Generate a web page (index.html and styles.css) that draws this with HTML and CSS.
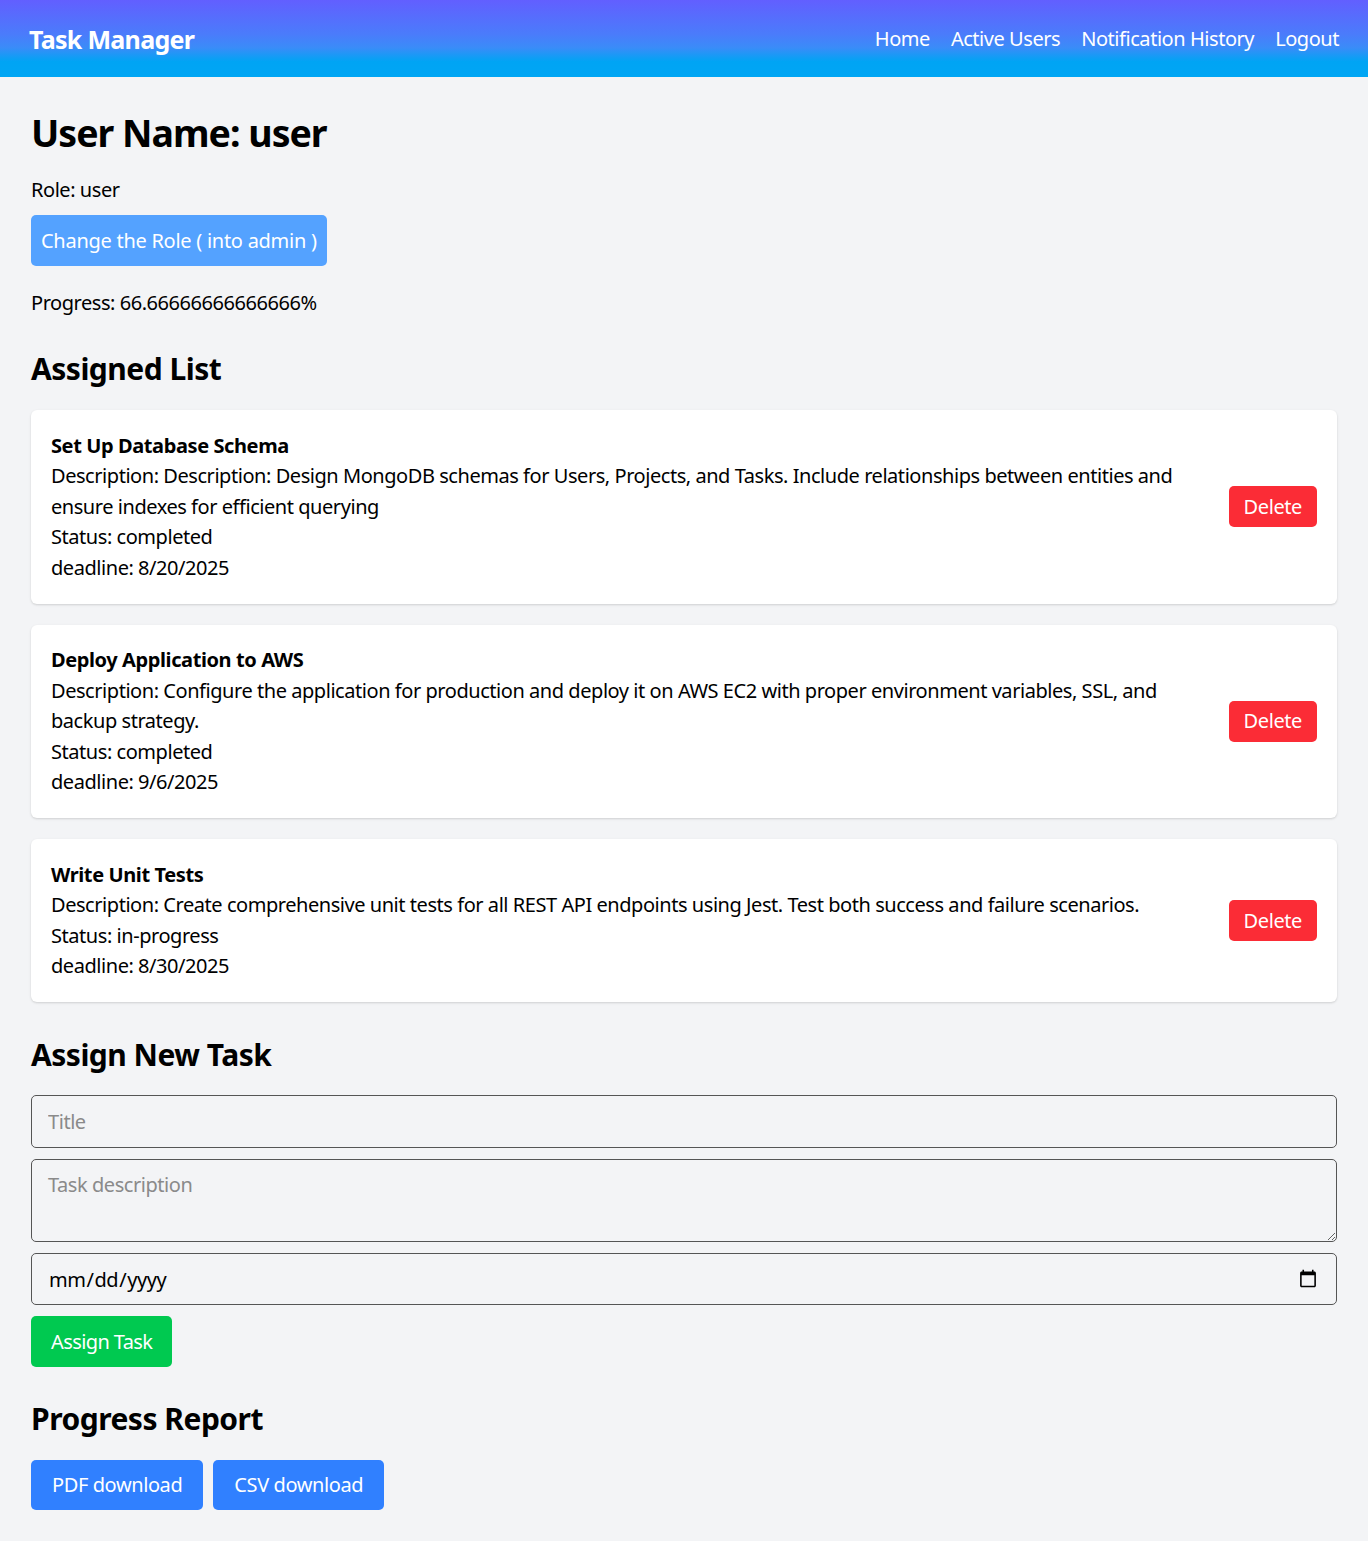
FILE: index.html
```html
<!DOCTYPE html>
<html lang="en">
<head>
<meta charset="utf-8">
<title>Task Manager</title>
<link rel="stylesheet" href="styles.css">
</head>
<body>
<header class="topbar">
  <div class="brand">Task Manager</div>
  <nav class="nav">
    <a href="#">Home</a>
    <a href="#">Active Users</a>
    <a href="#">Notification History</a>
    <a href="#">Logout</a>
  </nav>
</header>
<main class="page">
  <h1 class="title">User Name: user</h1>
  <p class="line role">Role: user</p>
  <div class="row role-row"><button class="btn btn-light">Change the Role ( into admin )</button></div>
  <p class="line progress">Progress: 66.66666666666666%</p>

  <h2 class="section assigned">Assigned List</h2>
  <div class="cards">
    <div class="card">
      <div class="card-body">
        <div class="card-title">Set Up Database Schema</div>
        <div>Description: Description: Design MongoDB schemas for Users, Projects, and Tasks. Include relationships between entities and ensure indexes for efficient querying</div>
        <div>Status: completed</div>
        <div>deadline: 8/20/2025</div>
      </div>
      <button class="btn btn-red">Delete</button>
    </div>
    <div class="card">
      <div class="card-body">
        <div class="card-title">Deploy Application to AWS</div>
        <div>Description: Configure the application for production and deploy it on AWS EC2 with proper environment variables, SSL, and backup strategy.</div>
        <div>Status: completed</div>
        <div>deadline: 9/6/2025</div>
      </div>
      <button class="btn btn-red">Delete</button>
    </div>
    <div class="card">
      <div class="card-body">
        <div class="card-title">Write Unit Tests</div>
        <div>Description: Create comprehensive unit tests for all REST API endpoints using Jest. Test both success and failure scenarios.</div>
        <div>Status: in-progress</div>
        <div>deadline: 8/30/2025</div>
      </div>
      <button class="btn btn-red">Delete</button>
    </div>
  </div>

  <h2 class="section newtask">Assign New Task</h2>
  <form class="form">
    <input class="field field-input" type="text" placeholder="Title">
    <textarea class="field field-area" placeholder="Task description"></textarea>
    <input class="field field-date" type="date">
    <div class="row"><button type="button" class="btn btn-green">Assign Task</button></div>
  </form>

  <h2 class="section report">Progress Report</h2>
  <div class="row downloads">
    <button class="btn btn-blue">PDF download</button>
    <button class="btn btn-blue">CSV download</button>
  </div>
</main>
</body>
</html>
```
FILE: styles.css
```css
* { box-sizing: border-box; }
html, body { margin: 0; padding: 0; }
body {
  background: #f3f4f6;
  font-family: "Noto Sans", "Open Sans", sans-serif;
  font-size: 20px;
  letter-spacing: -0.45px;
  color: #000;
}
.topbar {
  height: 77px;
  display: flex;
  align-items: center;
  justify-content: space-between;
  padding: 0 29px;
  background: linear-gradient(180deg, #625fff 0%, #4a7cfb 45%, #3a8cf8 62%, #00a4f4 80%, #00a6f4 100%);
  color: #fff;
}
.brand { font-size: 25px; font-weight: 700; line-height: 30px; letter-spacing: -0.7px; }
.nav { display: flex; gap: 21px; }
.nav a { color: #fff; text-decoration: none; font-size: 20px; line-height: 30px; }

.page {
  display: flex;
  flex-direction: column;
  padding: 33px 31px 31px;
}
.title { margin: 0; font-size: 37.5px; line-height: 45px; font-weight: 700; letter-spacing: -1px; }
.line { margin: 0; line-height: 30px; }
.role { margin-top: 20px; }
.row { display: flex; gap: 10px; }
.role-row { margin-top: 10px; }
.progress { margin-top: 22px; }

.btn {
  border: none;
  border-radius: 5px;
  color: #fff;
  font-family: inherit;
  font-size: 20px;
  letter-spacing: -0.4px;
  line-height: 30px;
  cursor: pointer;
}
.btn-light { background: #54a2ff; height: 51px; padding: 0 10px; letter-spacing: -0.27px; }
.btn-red { background: #fb2c36; height: 41px; padding: 0 15px; flex: none; }
.btn-green { background: #00c950; height: 51px; padding: 0 20px; letter-spacing: -0.6px; }
.btn-blue { background: #3080ff; height: 50px; padding: 0 21px; }

.section { margin: 0; font-size: 30px; line-height: 38px; font-weight: 700; letter-spacing: -0.5px; }
.assigned { margin-top: 32px; }
.newtask { margin-top: 34px; }
.report { margin-top: 33px; }

.cards { display: flex; flex-direction: column; gap: 21px; margin-top: 22px; }
.card {
  background: #fff;
  border-radius: 6px;
  box-shadow: 0 1px 3px rgba(0,0,0,0.1), 0 1px 2px rgba(0,0,0,0.06);
  padding: 20.5px 20px;
  display: flex;
  align-items: center;
  gap: 40px;
}
.card-body { flex: 1; line-height: 30.5px; }
.card-title { font-weight: 700; letter-spacing: -0.4px; }

.form { display: flex; flex-direction: column; gap: 11px; margin-top: 21px; }
.field {
  width: 100%;
  border: 1px solid #555;
  border-radius: 5px;
  background: transparent;
  font-family: inherit;
  font-size: 20px;
  letter-spacing: -0.45px;
  color: #000;
  padding: 0 16px;
}
.field::placeholder { color: #8a8a8a; }
.field-input { height: 53px; }
.field-area { height: 83px; padding-top: 11px; resize: vertical; line-height: 28px; }
.field-date { height: 52px; }
.downloads { margin-top: 22px; }
```
